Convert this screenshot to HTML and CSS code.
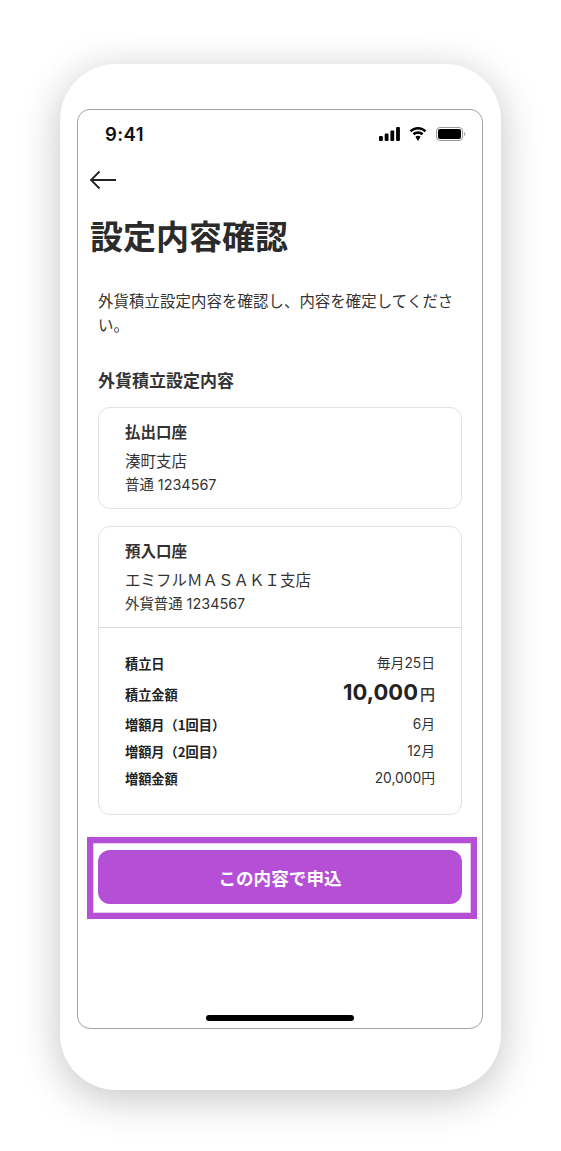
FILE: index.html
```html
<!DOCTYPE html>
<html lang="ja">
<head>
  <meta charset="UTF-8" />
  <meta name="viewport" content="width=device-width, initial-scale=1.0"/>
  <title>設定内容確認</title>
  <link rel="stylesheet" href="styles.css">
</head>
<body>
  <div class="phone">
    <div class="screen">
      <div class="status-bar">
        <span class="time">9:41</span>
        <div class="status-icons">
          <svg width="21" height="14" viewBox="0 0 21 14"><rect x="0" y="9" width="3.800" height="5" rx="1"/><rect x="5.700" y="6.500" width="3.800" height="7.500" rx="1"/><rect x="11.400" y="3.500" width="3.800" height="10.500" rx="1"/><rect x="17.100" y="0" width="3.800" height="14" rx="1"/></svg>
          <svg width="18" height="14" viewBox="0 0 18 14"><path d="M9 2.600c2.500 0 4.800 1 6.500 2.600l1.800-1.800C15.100 1.300 12.200 0 9 0S2.900 1.300.7 3.400l1.800 1.800C4.200 3.600 6.500 2.600 9 2.600z"/><path d="M9 6.900c1.400 0 2.700.5 3.600 1.400l1.800-1.800C13 5.100 11.100 4.300 9 4.300S5 5.100 3.600 6.500l1.800 1.800C6.300 7.400 7.600 6.900 9 6.900z"/><path d="M9 8.700c-1 0-1.900.4-2.600 1L9 14l2.600-4.300c-.7-.6-1.600-1-2.600-1z"/></svg>
          <svg width="30" height="14" viewBox="0 0 30 14"><rect x=".5" y=".5" width="26" height="13" rx="3.500" fill="none" stroke="#999"/><rect x="2" y="2" width="23" height="10" rx="2"/><path d="M28 5v4c.8-.3 1.400-1.100 1.400-2S28.800 5.300 28 5z" fill="#aaa"/></svg>
        </div>
      </div>

      <div class="back">
        <svg width="30" height="22" viewBox="0 0 30 22" fill="none" stroke="#222" stroke-width="1.800"><path d="M28 11H3M11.500 2.500L3 11l8.500 8.500"/></svg>
      </div>

      <h1>設定内容確認</h1>

      <div class="content">
        <p class="lead">外貨積立設定内容を確認し、内容を確定してください。</p>
        <h2>外貨積立設定内容</h2>

        <div class="card">
          <div class="account">
            <div class="account-label">払出口座</div>
            <div class="branch">湊町支店</div>
            <div class="number">普通 1234567</div>
          </div>
        </div>

        <div class="card">
          <div class="account">
            <div class="account-label">預入口座</div>
            <div class="branch">エミフルＭＡＳＡＫＩ支店</div>
            <div class="number">外貨普通 1234567</div>
          </div>
          <div class="details">
            <div class="row"><span class="key">積立日</span><span class="val">毎月25日</span></div>
            <div class="row row-amount"><span class="key">積立金額</span><span class="val"><b>10,000</b><i>円</i></span></div>
            <div class="row"><span class="key">増額月（1回目）</span><span class="val">6月</span></div>
            <div class="row"><span class="key">増額月（2回目）</span><span class="val">12月</span></div>
            <div class="row"><span class="key">増額金額</span><span class="val">20,000円</span></div>
          </div>
        </div>
      </div>

      <div class="highlight">
        <button class="submit-btn">この内容で申込</button>
      </div>

      <div class="home-bar"></div>
    </div>
  </div>
</body>
</html>
```

FILE: styles.css
```css
* { margin: 0; padding: 0; box-sizing: border-box; font-family: 'Inter', 'Noto Sans CJK JP', sans-serif; }
body { background: white; padding: 64px 60px 0; height: 1151px; overflow: hidden; }

.phone {
  width: 441px;
  height: 1026px;
  background: white;
  border-radius: 56px;
  padding: 45px 17px;
  box-shadow: 0 8px 40px rgba(0,0,0,0.24);
}

.screen {
  width: 406px;
  height: 920px;
  border: 1px solid #a3a3a3;
  border-radius: 13px;
  display: flex;
  flex-direction: column;
  color: #333;
}

.status-bar {
  display: flex;
  justify-content: space-between;
  align-items: center;
  height: 48px;
  padding: 1px 16px 1px 27px;
}

.time { font-size: 18.500px; font-weight: 600; color: #111; letter-spacing: 0.4px; }
.status-icons { display: flex; align-items: center; gap: 9px; }

.back { height: 22px; padding-left: 10px; margin-top: 11px; }
.back svg { display: block; }

h1 { font-size: 33px; font-weight: 700; line-height: 46px; margin: 23px 0 0 12px; color: #2b2b2b; }

.content { padding: 0 20px; }

.lead { font-size: 15.400px; line-height: 24px; margin-top: 30px; letter-spacing: 0.1px; }

h2 { font-size: 17px; font-weight: 700; line-height: 24px; margin: 31px 0 14px; }

.card {
  background: white;
  border: 1px solid #e2e2e2;
  border-radius: 12px;
  margin-bottom: 17px;
}

.account { padding: 14px 26px 13px; }
.account-label { font-size: 15.500px; font-weight: 700; line-height: 22px; }
.branch { font-size: 15.500px; line-height: 22px; margin-top: 7px; }
.number { font-size: 14.400px; line-height: 20px; margin-top: 2px; }

.details { border-top: 1px solid #dcdcdc; padding: 22px 26px; }

.row {
  display: flex;
  justify-content: space-between;
  align-items: center;
  height: 27px;
}

.row-amount { height: 34px; }

.key { font-family: 'Noto Sans CJK JP', sans-serif; font-size: 13.200px; font-weight: 700; color: #222; }
.val { font-size: 13.800px; line-height: 25px; margin-bottom: 1px; }
.val b { font-size: 22px; font-weight: 700; color: #222; }
.val i { font-style: normal; font-size: 15px; font-weight: 500; margin-left: 2px; }

.highlight {
  margin: 5px 0 0 9px;
  width: 390px;
  height: 82px;
  border: 6px solid #b44fd6;
  padding: 7px 9px 9px 5px;
  box-shadow: inset 0 0 0 1px #e6c8f0;
}

.submit-btn {
  display: block;
  width: 100%;
  height: 54px;
  background: #b44fd6;
  color: white;
  border: none;
  border-radius: 12px;
  font-size: 17.600px;
  font-weight: 700;
}

.home-bar {
  width: 148px;
  height: 6px;
  background: black;
  border-radius: 3px;
  margin: auto auto 7px;
}
```
